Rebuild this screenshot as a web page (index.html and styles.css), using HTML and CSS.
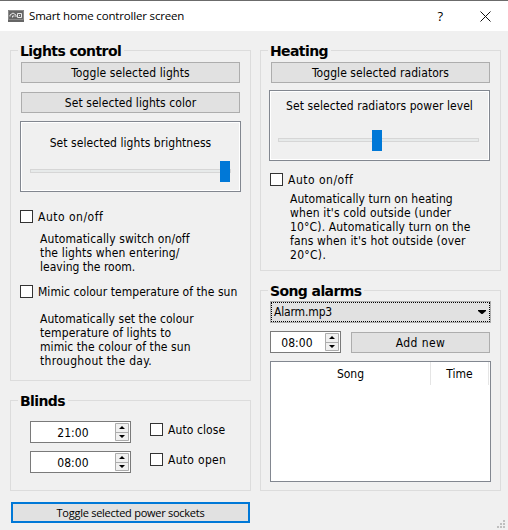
FILE: index.html
```html
<!DOCTYPE html>
<html lang="en">
<head>
<meta charset="utf-8">
<title>Smart home controller screen</title>
<link rel="stylesheet" href="styles.css">
</head>
<body>
<div class="window">
  <header class="titlebar">
    <svg class="app-icon" width="16" height="12" viewBox="0 0 16 12"><rect width="16" height="12" fill="#666"/><path d="M.5.5h15v9H.5z" fill="none" stroke="#8a8a8a"/><path d="M2 6.5V5l3-2 3 2v2M4.5 7.5V6h2M9.5 3.5h4v4h-4z" fill="none" stroke="#e8e8e8"/><path d="M11 5h1v1h-1z" fill="#ddd"/></svg>
    <span class="caption">Smart home controller screen</span>
    <span class="help">?</span>
    <svg class="close" width="11" height="11" viewBox="0 0 11 11"><path d="M.5.5l10 10M10.5.5l-10 10" stroke="#111" fill="none"/></svg>
  </header>
  <main class="columns">
    <div class="column">
      <section class="group lights">
        <h2 class="t-lights">Lights control</h2>
        <button class="btn"><span class="b1">Toggle selected lights</span></button>
        <button class="btn second"><span class="b2">Set selected lights color</span></button>
        <div class="panel">
          <span class="p1">Set selected lights brightness</span>
          <div class="track"><i class="handle full"></i></div>
        </div>
        <label class="check"><i class="box"></i><span class="c1">Auto on/off</span></label>
        <p class="note"><span class="n1">Automatically switch on/off</span><br><span class="n2">the lights when entering/</span><br><span class="n3">leaving the room.</span></p>
        <label class="check mimic"><i class="box"></i><span class="c2">Mimic colour temperature of the sun</span></label>
        <p class="note spaced"><span class="n4">Automatically set the colour</span><br><span class="n5">temperature of lights to</span><br><span class="n6">mimic the colour of the sun</span><br><span class="n7">throughout the day.</span></p>
      </section>
      <section class="group blinds">
        <h2 class="t-blinds">Blinds</h2>
        <div class="blind">
          <div class="spin"><span class="value">21:00</span><svg width="14" height="18" viewBox="0 0 14 18"><path d="M.5.5h13v17H.5zM1 9.5h12" fill="#f0f0f0" stroke="#acacac"/><path d="M7 3l3 3H4zM7 15l3-3H4z"/></svg></div>
          <label class="check"><i class="box"></i><span class="c3">Auto close</span></label>
        </div>
        <div class="blind">
          <div class="spin"><span class="value">08:00</span><svg width="14" height="18" viewBox="0 0 14 18"><path d="M.5.5h13v17H.5zM1 9.5h12" fill="#f0f0f0" stroke="#acacac"/><path d="M7 3l3 3H4zM7 15l3-3H4z"/></svg></div>
          <label class="check"><i class="box"></i><span class="c4">Auto open</span></label>
        </div>
      </section>
      <button class="btn sockets"><span class="b3">Toggle selected power sockets</span></button>
    </div>
    <div class="column">
      <section class="group heating">
        <h2 class="t-heating">Heating</h2>
        <button class="btn"><span class="b4">Toggle selected radiators</span></button>
        <div class="panel">
          <span class="p2">Set selected radiators power level</span>
          <div class="track"><i class="handle half"></i></div>
        </div>
        <label class="check"><i class="box"></i><span class="c1">Auto on/off</span></label>
        <p class="note"><span class="n8">Automatically turn on heating</span><br><span class="n9">when it's cold outside (under</span><br><span class="n10">10°C). Automatically turn on the</span><br><span class="n11">fans when it's hot outside (over</span><br><span class="n12">20°C).</span></p>
      </section>
      <section class="group songs">
        <h2 class="t-songs">Song alarms</h2>
        <div class="combo"><span class="c5">Alarm.mp3</span><svg width="8" height="4" viewBox="0 0 8 4"><path d="M0 0h8v1L4.5 4h-1L0 1z"/></svg></div>
        <div class="add-row">
          <div class="spin small"><span class="value">08:00</span><svg width="14" height="18" viewBox="0 0 14 18"><path d="M.5.5h13v17H.5zM1 9.5h12" fill="#f0f0f0" stroke="#acacac"/><path d="M7 3l3 3H4zM7 15l3-3H4z"/></svg></div>
          <button class="btn add"><span class="b5">Add new</span></button>
        </div>
        <div class="table">
          <div class="th song"><span>Song</span></div>
          <div class="th time"><span>Time</span></div>
        </div>
      </section>
    </div>
  </main>
  <svg class="grip" width="8" height="8" viewBox="0 0 8 8"><path d="M6 0h2v2H6zM3 3h2v2H3zM6 3h2v2H6zM0 6h2v2H0zM3 6h2v2H3zM6 6h2v2H6z" fill="#bfbfbf"/></svg>
</div>
</body>
</html>
```
FILE: styles.css
```css
* { box-sizing: border-box; }
body { margin: 0; background: #f0f0f0; color: #000; font: 12px/14px "DejaVu Sans Condensed", "DejaVu Sans", sans-serif; font-stretch: condensed; }
h2, p { margin: 0; }
span { white-space: nowrap; }
.window { position: relative; width: 508px; height: 530px; overflow: hidden; }
.titlebar { display: flex; align-items: center; height: 31px; padding: 0 17px 0 8px; border-top: 1px solid #6b6b6b; background: #fff; font-family: "Open Sans", sans-serif; font-stretch: normal; }
.caption { margin-left: 5px; flex: 1; font-size: 11.5px; letter-spacing: -.17px; }
.help { margin-right: 37px; font-size: 13px; }
.columns { display: flex; gap: 9px; padding: 19px 0 0 10px; }
.column { width: 241px; }
.group { border: 1px solid #dcdcdc; padding: 0 9px; }
h2 { width: fit-content; height: 18px; margin: -9px 0 2px -2px; padding: 0 3px 0 2px; background: #f0f0f0; font: bold 14px/18px "DejaVu Sans", sans-serif; font-stretch: normal; letter-spacing: -.6px; white-space: nowrap; }
.btn { display: flex; align-items: center; justify-content: center; width: 219px; height: 21px; margin: 0 0 0 1px; padding: 0; border: 1px solid #adadad; background: #e1e1e1; color: #000; font: inherit; }
.second { margin-top: 9px; }
.panel { display: flex; flex-direction: column; align-items: center; width: 221px; height: 71px; margin-top: 8px; padding-top: 14px; border: 1px solid #828790; box-shadow: inset 0 0 0 1px #fff; }
.track { width: 201px; height: 4px; margin-top: 19px; border: 1px solid #d6d6d6; background: #e7eaea; }
.handle { display: block; width: 10px; height: 21px; margin-top: -9px; background: #0078d7; }
.full { margin-left: 189px; }
.half { margin-left: 93px; }
.check { display: flex; align-items: center; height: 13px; gap: 5px; }
.check span { padding-top: 1px; }
.box { width: 13px; height: 13px; border: 1px solid #333; background: #fff; }
.lights { height: 331px; }
.lights .check { margin-top: 18px; }
.note { margin: 9px 0 0 20px; }
.lights .mimic { margin-top: 11px; }
.lights .spaced { margin-top: 14px; }
.blinds { height: 91px; margin-top: 19px; }
.blinds h2 { margin-bottom: 11px; }
.blind { display: flex; align-items: flex-start; margin: 0 0 8px 10px; }
.blind .check { margin: 2px 0 0 19px; }
.spin { display: flex; align-items: center; width: 101px; height: 22px; padding-right: 1px; border: 1px solid #7a7a7a; background: #fff; }
.value { flex: 1; padding-top: 2px; text-align: center; letter-spacing: .1px; }
.sockets { width: 239px; margin-top: 11px; border: 2px solid #0078d7; font: 11px/14px "Open Sans", sans-serif; }
.heating { height: 221px; }
.heating .panel { margin: 7px 0 0 -1px; padding-top: 8px; }
.heating .track { margin: 25px 2px 0 0; }
.heating .check { margin-top: 12px; }
.heating .note { margin-top: 6px; }
.songs { height: 201px; margin-top: 19px; }
.songs h2 { margin-bottom: 1px; }
.combo { display: flex; align-items: center; justify-content: space-between; width: 221px; height: 22px; padding: 0 4px 0 3px; border: 1px solid #adadad; outline: 1px dotted #000; outline-offset: -2px; background: #e1e1e1; }
.add-row { display: flex; gap: 9px; margin-top: 8px; }
.small { width: 71px; }
.small .value { padding-right: 2px; }
.add { width: 139px; margin-top: 1px; }
.table { display: flex; width: 221px; height: 121px; margin-top: 8px; border: 1px solid #828790; background: #fff; }
.th { height: 23px; border-right: 1px solid #e5e5e5; line-height: 25px; text-align: center; }
.song { width: 160px; }
.time { width: 58px; }
.grip { position: absolute; right: 3px; bottom: 2px; }

/* Per-label tracking */
.b1, .n1, .n5, .c3 { letter-spacing: .1px; }
.b2, .b4, .p2, .n6 { letter-spacing: .07px; }
.p1, .c2, .n4, .n8 { letter-spacing: .05px; }
.n2, .n9, .n10, .n11 { letter-spacing: .15px; }
.c1 { letter-spacing: .5px; }
.n7, .n12, .c4 { letter-spacing: .3px; }
.b5 { letter-spacing: .4px; }
.c5 { letter-spacing: -.15px; }
.b3 { letter-spacing: -.26px; }
```
